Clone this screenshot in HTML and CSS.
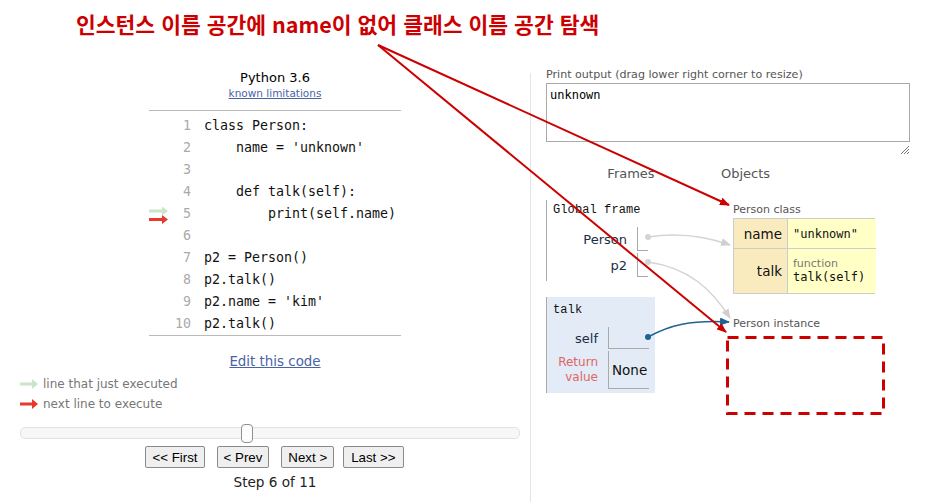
FILE: index.html
```html
<!DOCTYPE html>
<html lang="ko">
<head>
<meta charset="utf-8">
<title>Python Tutor</title>
<link rel="stylesheet" href="styles.css">
</head>
<body>
<div class="page">
  <h1 class="note">인스턴스 이름 공간에 name이 없어 클래스 이름 공간 탐색</h1>
  <div class="main">
    <div class="left">
      <div class="lang">Python 3.6</div>
      <a class="link limits">known limitations</a>
      <div class="code">
        <div class="row"><span class="gut"></span><span class="ln">1</span><span class="src">class Person:</span></div>
        <div class="row"><span class="gut"></span><span class="ln">2</span><span class="src">    name = 'unknown'</span></div>
        <div class="row"><span class="gut"></span><span class="ln">3</span><span class="src"></span></div>
        <div class="row"><span class="gut"></span><span class="ln">4</span><span class="src">    def talk(self):</span></div>
        <div class="row"><span class="gut"><svg width="20" height="22" viewBox="0 0 20 22"><path d="M0 7.5h13v-3l6 4.5-6 4.5v-3H0z" fill="#c8e6c9"/><path d="M0 16h13v-3l6 4.5-6 4.5v-3H0z" fill="#e8392f"/></svg></span><span class="ln">5</span><span class="src">        print(self.name)</span></div>
        <div class="row"><span class="gut"></span><span class="ln">6</span><span class="src"></span></div>
        <div class="row"><span class="gut"></span><span class="ln">7</span><span class="src">p2 = Person()</span></div>
        <div class="row"><span class="gut"></span><span class="ln">8</span><span class="src">p2.talk()</span></div>
        <div class="row"><span class="gut"></span><span class="ln">9</span><span class="src">p2.name = 'kim'</span></div>
        <div class="row"><span class="gut"></span><span class="ln">10</span><span class="src">p2.talk()</span></div>
      </div>
      <a class="link edit">Edit this code</a>
      <div class="legend">
        <div class="lrow"><svg width="18" height="10" viewBox="0 0 18 10"><path d="M0 3.5h12V0l6 5-6 5V6.5H0z" fill="#c8e6c9"/></svg><span>line that just executed</span></div>
        <div class="lrow"><svg width="18" height="10" viewBox="0 0 18 10"><path d="M0 3.5h12V0l6 5-6 5V6.5H0z" fill="#e8392f"/></svg><span>next line to execute</span></div>
      </div>
      <div class="slider"><div class="thumb"></div></div>
      <div class="buttons">
        <button class="btn">&lt;&lt; First</button>
        <button class="btn">&lt; Prev</button>
        <button class="btn">Next &gt;</button>
        <button class="btn last">Last &gt;&gt;</button>
      </div>
      <div class="step">Step 6 of 11</div>
    </div>
    <div class="right">
      <div class="outlabel">Print output (drag lower right corner to resize)</div>
      <div class="output">unknown</div>
      <div class="gripline"><svg width="8" height="8" viewBox="0 0 8 8"><path d="M8 0L0 8M8 3L3 8M8 6L6 8" stroke="#777" stroke-width="1"/></svg></div>
      <div class="viz">
        <div class="stack">
          <div class="vhdr">Frames</div>
          <div class="frame global">
            <div class="fname">Global frame</div>
            <div class="var first"><span class="vname">Person</span><span class="vval ptr"></span></div>
            <div class="var"><span class="vname">p2</span><span class="vval ptr"></span></div>
          </div>
          <div class="frame cur">
            <div class="fname">talk</div>
            <div class="var self"><span class="vname">self</span><span class="vval wide"></span></div>
            <div class="var retv"><span class="vname ret">Return<br>value</span><span class="vval wide">None</span></div>
          </div>
        </div>
        <div class="heap">
          <div class="vhdr objhdr">Objects</div>
          <div class="olabel">Person class</div>
          <div class="cls">
            <div class="k k1">name</div><div class="v v1">"unknown"</div>
            <div class="k k2">talk</div><div class="v v2"><span class="fn">function</span><span class="sig">talk(self)</span></div>
          </div>
          <div class="olabel inst">Person instance</div>
        </div>
      </div>
    </div>
  </div>
  <svg class="overlay" width="932" height="502" viewBox="0 0 932 502">
    <defs>
      <marker id="rh" markerWidth="10" markerHeight="8" refX="9" refY="4" orient="auto" markerUnits="userSpaceOnUse"><path d="M0 0L10 4L0 8z" fill="#cc0000"/></marker>
      <marker id="gh" markerWidth="10" markerHeight="8" refX="9" refY="4" orient="auto" markerUnits="userSpaceOnUse"><path d="M0 0L10 4L0 8z" fill="#cfcfcf"/></marker>
      <marker id="bh" markerWidth="10" markerHeight="8" refX="9" refY="4" orient="auto" markerUnits="userSpaceOnUse"><path d="M0 0L10 4L0 8z" fill="#1f6391"/></marker>
    </defs>
    <path d="M648 237C680 232 705 236 730 245" fill="none" stroke="#d4d4d4" stroke-width="1.5" marker-end="url(#gh)"/>
    <circle cx="648" cy="237" r="3" fill="#d4d4d4"/>
    <path d="M648 262C690 268 712 290 730 318" fill="none" stroke="#d4d4d4" stroke-width="1.5" marker-end="url(#gh)"/>
    <circle cx="648" cy="262" r="3" fill="#d4d4d4"/>
    <path d="M648 337C670 325 690 320 729 322" fill="none" stroke="#1f6391" stroke-width="1.5" marker-end="url(#bh)"/>
    <circle cx="648" cy="337" r="3" fill="#1f6391"/>
    <line x1="378" y1="45" x2="729" y2="205" stroke="#cc0000" stroke-width="2" marker-end="url(#rh)"/>
    <line x1="378" y1="45" x2="726" y2="332" stroke="#cc0000" stroke-width="2" marker-end="url(#rh)"/>
    <rect x="727.5" y="337.5" width="156" height="76" fill="none" stroke="#cc0000" stroke-width="3" stroke-dasharray="11 7"/>
  </svg>
</div>
</body>
</html>
```

FILE: styles.css
```css
* { box-sizing: border-box; }
html, body { margin: 0; padding: 0; background: #fff; }
body {
  width: 932px;
  height: 502px;
  overflow: hidden;
  font-family: "DejaVu Sans", Verdana, sans-serif;
  color: #000;
}
.page { position: relative; width: 932px; height: 502px; }

.note {
  margin: 0;
  height: 50px;
  padding-left: 76px;
  font: bold 21.5px/48px "Noto Sans CJK KR", "Liberation Sans", sans-serif;
  color: #cc0000;
}

.main { display: flex; }

/* left pane */
.left {
  width: 510px;
  margin-left: 20px;
  padding-top: 20px;
  display: flex;
  flex-direction: column;
  align-items: center;
}
.lang { font-size: 13px; line-height: 16px; color: #000; }
.link { color: #4a63a5; text-decoration: underline; cursor: pointer; }
.limits { font-size: 10.5px; line-height: 15px; }
.code {
  margin-top: 9px;
  width: 252px;
  border-top: 1px solid #bbb;
  border-bottom: 1px solid #bbb;
  padding: 3px 0 1px;
  font-family: "DejaVu Sans Mono", "Liberation Mono", monospace;
  font-size: 13.3px;
}
.row { display: flex; align-items: center; height: 22px; }
.gut { width: 20px; height: 22px; display: flex; }
.ln { width: 22px; text-align: right; color: #aaa; }
.src { margin-left: 13px; white-space: pre; color: #111; }
.edit { margin-top: 18px; font-size: 13.4px; line-height: 16px; }
.legend { align-self: flex-start; margin-top: 4px; }
.lrow { display: flex; align-items: center; height: 20px; font-size: 12px; color: #777; }
.lrow span { margin-left: 5px; }
.slider {
  align-self: flex-start;
  margin-top: 13px;
  width: 500px;
  height: 12px;
  border: 1px solid #e2e2e2;
  border-radius: 5px;
  background: #f7f7f7;
  position: relative;
}
.thumb {
  position: absolute;
  left: 220px;
  top: -4px;
  width: 12px;
  height: 19px;
  border: 1px solid #8f8f8f;
  border-radius: 4px;
  background: #fdfdfd;
}
.buttons { display: flex; gap: 12px; margin-top: 7px; margin-left: -1px; }
.btn {
  height: 22px;
  padding: 0 6px;
  font: 13.3px "Liberation Sans", Arial, sans-serif;
  color: #000;
  background: #efefef;
  border: 1px solid #8a8a8a;
  border-radius: 2px;
}
.btn.last { padding: 0 7px; margin-left: -3px; }
.step { margin-top: 6px; font-size: 13.6px; line-height: 16px; color: #222; }

/* right pane */
.right {
  margin-top: 23px;
  padding-left: 15px;
  border-left: 1px solid #e4e4e4;
  height: 429px;
  width: 401px;
}
.outlabel { margin-top: -5px; font: 11.1px/14px "DejaVu Sans", sans-serif; color: #555; }
.output {
  margin-top: 1px;
  width: 364px;
  height: 59px;
  border: 1px solid #aaa;
  padding: 4px 3px;
  font: 12px/15px "DejaVu Sans Mono", monospace;
  color: #000;
}
.gripline { width: 364px; height: 12px; display: flex; justify-content: flex-end; align-items: flex-end; padding-right: 1px; }

.viz { display: flex; margin-top: 12px; }
.stack { width: 170px; }
.vhdr { font-size: 13px; line-height: 16px; color: #555; text-align: center; }
.frame { border-left: 1px solid #aaa; }
.global { margin-top: 18px; width: 110px; padding-bottom: 3px; }
.fname {
  padding-left: 6px;
  height: 20px;
  font: 12px/20px "Liberation Mono", monospace;
  letter-spacing: 0.1px;
  color: #111;
}
.var { display: flex; }
.global .var { height: 26px; align-items: center; }
.global .var.first { margin-top: 6px; }
.vname { width: 90px; text-align: right; padding-right: 10px; font-size: 13px; color: #1b2e45; }
.vval {
  width: 11px;
  align-self: stretch;
  border-left: 1px solid #aaa;
  border-bottom: 1px solid #aaa;
  margin: 1px 0;
}
.cur { margin-top: 16px; padding-top: 3px; width: 109px; height: 96px; background: #e2ebf6; }
.cur .vname { width: 61px; }
.vval.wide { width: 41px; }
.self { margin-top: 7px; height: 22px; align-items: center; }
.self .vval { margin: 0; }
.retv { margin-top: 2px; height: 38px; align-items: center; }
.retv .vval { margin: 0; display: flex; align-items: center; padding-left: 3px; font-size: 13.5px; color: #111; }
.ret { font-size: 12px; line-height: 15px; color: #e06666; }

.heap { padding-left: 5px; }
.objhdr { text-align: left; }
.olabel { margin-top: 21px; margin-left: 12px; font-size: 11px; line-height: 14px; color: #555; }
.cls {
  margin-left: 12px;
  margin-top: 1px;
  display: grid;
  grid-template-columns: 54px 88px;
  grid-template-rows: 30px 44px;
  border: 1px solid #ccc;
  width: 142px;
}
.k { background: #faebbf; padding-right: 5px; font-size: 13.5px; color: #111; border-right: 1px solid #ccc; display: flex; align-items: center; justify-content: flex-end; }
.v { background: #ffffc6; padding-left: 5px; display: flex; flex-direction: column; justify-content: center; }
.k1, .v1 { border-bottom: 1px solid #ccc; }
.v1 { font: 12px "DejaVu Sans Mono", monospace; color: #111; }
.fn { font-size: 11px; line-height: 13px; color: #777; }
.sig { font: 12px/15px "DejaVu Sans Mono", monospace; color: #111; }
.inst { margin-top: 23px; }

.overlay { position: absolute; left: 0; top: 0; pointer-events: none; }
```
